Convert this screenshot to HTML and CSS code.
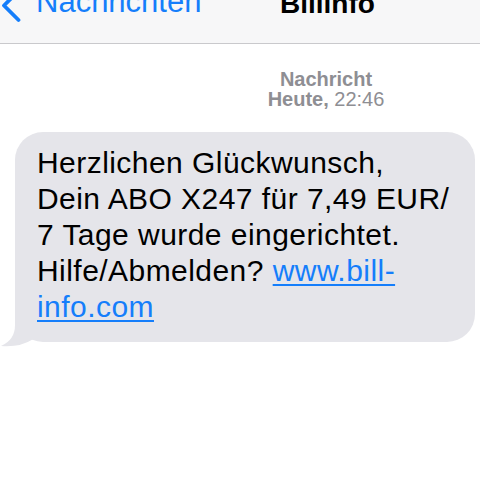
FILE: index.html
```html
<!DOCTYPE html>
<html lang="de">
<head>
<meta charset="utf-8">
<title>Billinfo</title>
<link rel="stylesheet" href="styles.css">
</head>
<body>
<header class="nav">
  <svg class="chev" width="24" height="36" viewBox="0 0 24 36" aria-hidden="true">
    <path d="M18 3.5 L4 17.5 L18.5 32" fill="none" stroke="#157efb" stroke-width="3.8" stroke-linecap="round" stroke-linejoin="round"/>
  </svg>
  <span class="back">Nachrichten</span>
  <span class="title">Billinfo</span>
</header>
<main class="thread">
  <div class="stamp"><b>Nachricht</b><br><b>Heute,</b> 22:46</div>
  <div class="bubble">
    <p class="msg">Herzlichen Glückwunsch,<br>Dein ABO X247 für 7,49 EUR/<br>7 Tage wurde eingerichtet.<br>Hilfe/Abmelden? <a class="link" href="#">www.bill-<br>info.com</a></p>
    <svg class="tail" width="45" height="43" viewBox="0 0 45 43" aria-hidden="true">
      <path d="M15 3 L15 20 Q15 35 1 41 Q20 42.5 32.5 34.5 L42 28 L15 3 Z" fill="#e5e5ea"/>
    </svg>
  </div>
</main>
</body>
</html>
```
FILE: styles.css
```css
html, body {
  margin: 0;
  padding: 0;
  background: #ffffff;
}
body {
  width: 480px;
  height: 480px;
  overflow: hidden;
  font-family: "Liberation Sans", Arial, Helvetica, sans-serif;
}
.nav {
  display: flex;
  align-items: flex-start;
  height: 43px;
  background: #f7f7f8;
  border-bottom: 1px solid #c9c9cc;
  overflow: hidden;
}
.chev {
  display: block;
  flex: none;
  margin-top: -12px;
  margin-right: 12px;
}
.back {
  flex: none;
  width: 244px;
  margin-top: -14px;
  font-size: 31px;
  line-height: 31px;
  color: #157efb;
  white-space: nowrap;
}
.title {
  flex: none;
  margin-top: -12px;
  font-size: 28px;
  line-height: 31px;
  font-weight: bold;
  color: #000;
  white-space: nowrap;
}
.thread {
  display: flex;
  flex-direction: column;
}
.stamp {
  margin-top: 25px;
  padding-left: 172px;
  text-align: center;
  font-size: 20px;
  line-height: 20px;
  color: #8e8e93;
  white-space: nowrap;
}
.stamp b {
  font-weight: bold;
}
.bubble {
  position: relative;
  margin-top: 23px;
  margin-left: 15px;
  width: 460px;
  box-sizing: border-box;
  padding: 13px 20px 17px 22px;
  background: #e5e5ea;
  border-radius: 28px;
}
.msg {
  position: relative;
  z-index: 1;
  margin: 0;
  font-size: 30px;
  line-height: 36px;
  letter-spacing: 0.45px;
  color: #000;
  white-space: nowrap;
}
.link {
  color: #157efb;
  text-decoration: underline;
  text-decoration-thickness: 2px;
  text-underline-offset: 3px;
}
.tail {
  position: absolute;
  left: -15px;
  bottom: -6px;
  display: block;
}
```
